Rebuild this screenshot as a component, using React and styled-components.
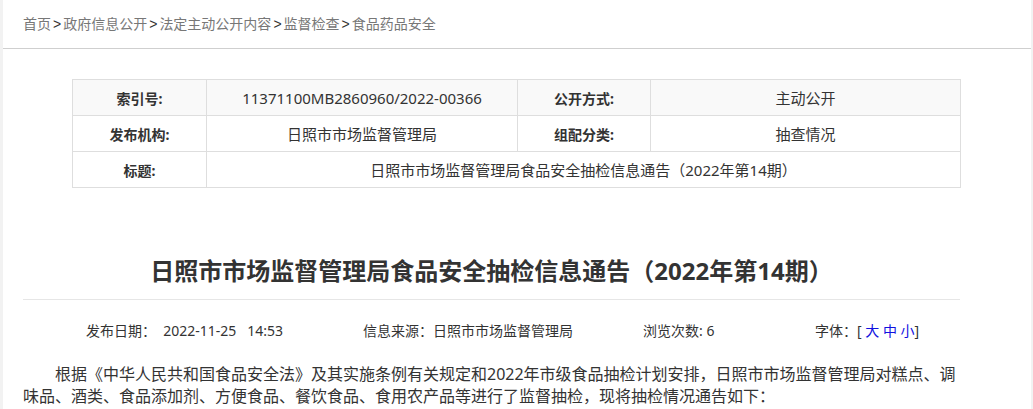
import React from 'react';
import styled, { createGlobalStyle } from 'styled-components';

const GlobalStyle = createGlobalStyle`
  html, body {
    margin: 0;
    padding: 0;
    background: #f2f2f2;
  }
  body {
    font-family: "Noto Sans", "Noto Sans CJK SC", sans-serif;
    color: #333;
  }
`

const Page = styled.div`
  margin: 0 2px 0 3px;
  background: #fff;
  min-height: 409px;
`

const Crumbs = styled.div`
  height: 48px;
  line-height: 47px;
  padding-left: 20px;
  border-bottom: 1px solid #cfcfcf;
  font-size: 14px;
  color: #777;
`

const Sep = styled.span`
  color: #333;
  margin: 0 2px;
  font-family: "Liberation Sans", sans-serif;
`

const InfoTable = styled.table`
  width: 888px;
  margin: 30px 0 0 69px;
  border-collapse: collapse;
  table-layout: fixed;
  tr:first-child td {
    background: #f9f9f9;
  }
`

const Cell = styled.td`
  height: 35px;
  padding: 0;
  border: 1px solid #dedede;
  text-align: center;
  font-size: ${p => (p.$label ? 14 : 15)}px;
  font-weight: ${p => (p.$label ? 700 : 400)};
  color: #333;
`

const Article = styled.div`
  margin-left: 20px;
  width: 937px;
`

const Title = styled.h1`
  margin: 65px 0 0;
  padding-bottom: 10px;
  border-bottom: 1px solid #e6e6e6;
  font-size: 24px;
  line-height: 36px;
  font-weight: 700;
  text-align: center;
  color: #333;
`

const Meta = styled.div`
  display: flex;
  margin-top: 21px;
  padding-left: 63px;
  font-size: 14px;
  line-height: 20px;
  color: #333;
`

const MetaItem = styled.div`
  width: ${p => p.$w}px;
  white-space: pre;
  flex-shrink: 0;
`

const SizeLink = styled.a`
  color: #1010e0;
  text-decoration: none;
  cursor: pointer;
`

const Para = styled.p`
  margin: 22px 0 0;
  font-size: 16px;
  line-height: 22px;
  text-indent: 2em;
  color: #333;
`

const rows = [
  ['索引号:', '11371100MB2860960/2022-00366', '公开方式:', '主动公开'],
  ['发布机构:', '日照市市场监督管理局', '组配分类:', '抽查情况'],
]

const crumbs = ['首页', '政府信息公开', '法定主动公开内容', '监督检查', '食品药品安全']

export default function App() {
  return (
    <>
      <GlobalStyle />
      <Page>
        <Crumbs>
          {crumbs.map((c, i) => (
            <React.Fragment key={c}>
              {i > 0 && <Sep>&gt;</Sep>}
              {c}
            </React.Fragment>
          ))}
        </Crumbs>

        <InfoTable>
          <colgroup>
            <col style={{ width: 134 }} />
            <col style={{ width: 311 }} />
            <col style={{ width: 133 }} />
            <col style={{ width: 310 }} />
          </colgroup>
          <tbody>
            {rows.map((r) => (
              <tr key={r[0]}>
                <Cell $label>{r[0]}</Cell>
                <Cell>{r[1]}</Cell>
                <Cell $label>{r[2]}</Cell>
                <Cell>{r[3]}</Cell>
              </tr>
            ))}
            <tr>
              <Cell $label>标题:</Cell>
              <Cell colSpan={3}>日照市市场监督管理局食品安全抽检信息通告（2022年第14期）</Cell>
            </tr>
          </tbody>
        </InfoTable>

        <Article>
          <Title>日照市市场监督管理局食品安全抽检信息通告（2022年第14期）</Title>
          <Meta>
            <MetaItem $w={277}>发布日期：  2022-11-25   14:53</MetaItem>
            <MetaItem $w={280}>信息来源：日照市市场监督管理局</MetaItem>
            <MetaItem $w={172}>浏览次数: 6</MetaItem>
            <MetaItem $w={150}>
              字体：[ <SizeLink>大</SizeLink> <SizeLink>中</SizeLink> <SizeLink>小</SizeLink>]
            </MetaItem>
          </Meta>
          <Para>
            根据《中华人民共和国食品安全法》及其实施条例有关规定和2022年市级食品抽检计划安排，日照市市场监督管理局对糕点、调味品、酒类、食品添加剂、方便食品、餐饮食品、食用农产品等进行了监督抽检，现将抽检情况通告如下：
          </Para>
        </Article>
      </Page>
    </>
  );
}
